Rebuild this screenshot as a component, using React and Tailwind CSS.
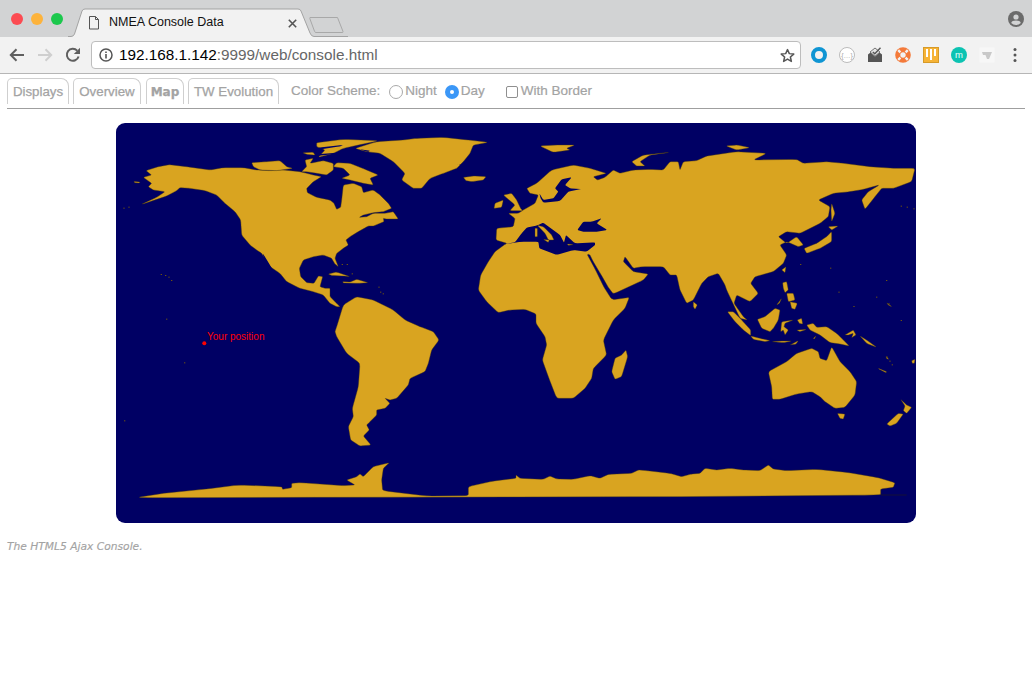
const GOLD = "#d9a420";
const NAVY = "#000064";

const Z3 = "translate(110 120) scale(0.33333)";
const Z4 = "translate(510 120) scale(0.33333)";
const Z5 = "translate(110 320) scale(0.33333)";
const Z6 = "translate(510 320) scale(0.33333)";
const Z8 = "translate(720 270) scale(0.33333)";

const northAmerica = [
  "108,152 145,140 178,134 230,140 300,150 340,143 400,143 440,150 480,152 520,150 570,155 590,160 610,165 635,170 610,185 590,205 592,218 620,232 660,240 672,250 680,268 692,262 695,240 700,195 730,190 755,200 760,218 790,210 810,225 835,250 845,265 820,275 790,278 760,285 748,292 770,290 790,280 825,280 850,275 865,297 830,297 820,295 822,305 790,318 775,318 745,335 720,350 708,360 715,375 700,385 680,400 675,415 685,440 675,432 665,415 640,405 610,410 580,420 568,445 572,470 590,488 612,490 625,468 638,470 630,500 645,505 660,505 660,530 680,550 690,560 680,560 660,550 640,525 610,515 570,505 530,485 510,460 480,440 455,400 440,390 420,375 395,345 392,300 375,275 345,250 320,225 285,212 240,205 210,203 200,212 170,228 120,245 95,253 140,232 165,215 130,210 115,200 125,190 100,172 125,165",
  "680,128 720,130 770,150 805,165 780,175 790,195 760,190 720,180 695,175 720,165 700,145 670,140",
  "425,128 470,125 510,122 530,140 548,145 500,152 450,150 430,140",
  "578,98 610,97 615,105 590,103",
  "585,120 610,115 600,130 640,122 670,130 670,150 650,165 620,160 590,155 575,155 590,140",
  "620,68 700,58 805,62 760,72 700,85 670,100 625,112 645,90 620,80",
  "735,85 800,65 880,60 920,55 1000,52 1075,60 1135,67 1090,75 1080,100 1060,125 1040,145 1000,160 960,175 935,205 910,205 875,180 885,160 850,125 810,100 770,95",
  "1060,172 1090,168 1128,170 1120,180 1085,185 1068,182",
  "72,184 90,186 88,189 74,188",
  "655,462 680,456 720,470 700,468 665,466",
  "698,485 720,486 740,478 775,488 745,490 700,489",
];

const naNavy = [
  "458,400 466,412 490,452 482,448 462,418",
  "625,83 700,75 690,79 630,88",
  "622,103 680,98 675,102 625,107",
  "750,88 780,92 775,96",
  "1040,135 1070,128 1065,132",
];

const eurasia =
  "50,205 80,190 125,150 190,135 240,145 290,160 250,170 262,180 285,172 310,150 330,160 370,150 420,148 460,150 480,125 505,125 510,150 520,125 560,122 590,108 680,95 770,100 730,120 860,118 880,130 950,125 1000,130 1080,140 1150,145 1215,145 1205,185 1150,205 1115,205 1095,230 1065,268 1055,240 1075,215 1108,195 1060,208 1020,215 970,220 925,240 960,260 955,290 930,310 870,340 830,335 805,350 830,370 860,350 880,375 865,380 830,365 810,375 830,405 820,430 790,455 735,470 722,490 745,520 720,545 680,525 672,550 700,590 712,600 690,595 650,510 645,495 625,460 595,470 575,490 550,540 530,550 510,510 500,465 480,465 460,440 395,440 370,445 345,410 340,425 370,455 415,462 400,480 310,522 295,502 272,462 248,422 240,405 236,403 232,404 255,447 282,502 303,535 312,539 358,532 345,565 310,600 280,660 290,705 250,745 245,775 225,805 190,835 140,835 115,770 97,720 110,675 105,650 78,610 78,582 45,568 0,570 -35,578 -70,545 -95,510 -88,465 -65,425 -45,395 -18,375 -10,370 -42,360 -40,325 10,320 15,295 -5,280 25,280 40,270 75,250 85,225 60,220";

const eurasiaNavy = [
  "88,220 100,240 130,235 145,215 135,205 155,178 185,172 165,195 180,205 215,207 175,215 150,243 100,248 92,235",
  "-18,373 15,367 35,340 50,323 82,316 100,308 150,345 162,368 168,345 195,370 255,367 255,375 230,395 190,390 140,405 88,385 85,365 35,365",
  "202,330 220,305 245,305 275,295 260,310 292,330 260,335 220,335",
];

const eurasiaGold = [
  "82,316 100,320 125,345 132,360 115,360 105,340",
  "75,325 82,325 82,350 75,350",
  "100,358 118,360 115,367",
  "172,372 190,374 175,376",
  "-20,225 5,220 20,240 32,265 38,272 0,272 15,255",
  "-45,250 -20,240 -25,262 -48,265",
  "90,78 135,75 195,75 170,85 180,90 130,97",
  "365,125 400,105 480,97 420,105 390,125 405,138 380,138",
  "648,78 680,75 720,83 680,90",
  "882,385 920,370 950,350 965,335 965,365 930,385 890,400",
  "955,320 985,318 965,330",
  "965,250 975,280 965,305 963,270",
  "815,450 828,440 825,458",
  "550,545 562,555 555,568 550,560",
];

const southAmerica =
  "680,20 700,-45 740,-70 790,-60 850,-30 885,0 930,20 970,35 987,60 965,90 955,130 945,155 900,175 895,195 860,235 840,240 825,235 840,250 825,265 800,270 800,285 780,305 770,315 778,330 760,348 783,375 750,378 722,360 715,320 730,290 727,265 745,200 750,130 710,100 680,50 675,35";

const antarctica =
  "78,533 160,520 290,507 385,495 515,500 518,508 545,503 545,490 570,488 700,497 735,495 710,480 740,470 750,462 760,470 790,440 838,428 820,445 815,480 818,512 950,528 1075,527 1075,500 1150,483 1218,475 1218,465 1230,475 1300,478 1320,468 1340,477 1390,478 1440,467 1470,475 1495,463 1565,460 1585,450 1610,452 1680,460 1715,470 1745,462 1770,460 1785,445 1820,450 1860,445 1900,450 1950,452 1975,435 1990,447 2030,452 2120,448 2210,457 2300,472 2355,488 2350,502 2312,507 2312,525 1700,530 700,532";

const oceania = [
  "775,155 830,125 860,100 905,85 925,95 930,115 950,122 965,80 990,125 1020,155 1040,185 1035,225 1005,262 975,265 945,245 930,230 905,215 860,222 810,238 787,238 785,200",
  "982,280 1005,282 1000,297 990,295",
  "1172,238 1190,255 1205,262 1190,280 1180,272 1185,258",
  "1130,312 1165,280 1180,282 1160,310 1140,318",
  "348,90 353,110 335,170 315,178 305,155 315,115 335,105",
  "1105,145 1130,155 1128,158 1108,148",
  "1205,122 1215,118 1213,130 1207,130",
];

const seAsia = [
  "22,125 40,125 65,150 92,180 92,197 70,180 45,155",
  "112,148 135,140 165,115 180,120 175,150 160,175 150,185 125,175",
  "92,198 120,205 150,212 135,215 100,208",
  "155,215 190,213 215,213 190,218",
  "210,225 235,212 228,222",
  "185,155 220,150 195,160 192,170 205,180 195,195 190,180 182,185",
  "188,38 200,35 205,60 195,68 190,55",
  "210,95 232,100 225,118 215,115",
  "200,70 220,70 225,90 205,95",
  "170,105 185,85 178,100",
  "232,150 245,145 248,162 238,160",
  "230,180 260,178 240,185",
  "260,165 280,160 290,172 320,170 350,190 370,210 388,228 360,222 330,218 300,195 270,180",
  "375,195 400,180 408,195 395,203 400,190 385,195",
  "420,198 440,210 470,232 440,220",
  "280,205 288,198 283,207",
  "500,98 515,110 505,105",
  "498,258 506,268 500,266",
];

const specks = [
  [Z3, 152, 462], [Z3, 165, 465], [Z3, 175, 470], [Z3, 183, 480], [Z3, 40, 263], [Z3, 55, 260], [Z3, 168, 596],
  [Z3, 805, 500], [Z3, 810, 515], [Z3, 818, 520], [Z3, 695, 432], [Z3, 710, 432], [Z3, 725, 460],
  [Z4, 870, 432], [Z4, 960, 443], [Z4, 1128, 480], [Z4, 1172, 257], [Z4, 1190, 260], [Z4, 1210, 265], [Z4, 1172, 600],
  [Z4, 985, 515], [Z4, 1030, 558], [Z4, 1098, 530], [Z4, 1135, 550],
  [Z5, 222, 127], [Z5, 42, 301],
  [Z6, 1130, 110], [Z6, 1138, 122], [Z6, 1145, 133],
];

// Softens polygon corners so the coasts read as curves rather than straight facets.
function smooth(points) {
  const p = points.trim().split(/\s+/).map((s) => s.split(",").map(Number));
  const n = p.length;
  const cut = 0.14;
  let d = "";
  for (let i = 0; i < n; i++) {
    const a = p[(i - 1 + n) % n];
    const b = p[i];
    const c = p[(i + 1) % n];
    const x1 = b[0] + (a[0] - b[0]) * cut;
    const y1 = b[1] + (a[1] - b[1]) * cut;
    const x2 = b[0] + (c[0] - b[0]) * cut;
    const y2 = b[1] + (c[1] - b[1]) * cut;
    d += (i === 0 ? "M" : "L") + x1.toFixed(1) + " " + y1.toFixed(1) + "Q" + b[0] + " " + b[1] + " " + x2.toFixed(1) + " " + y2.toFixed(1);
  }
  return d + "Z";
}

function Polys({ transform, pts, fill }) {
  return (
    <g transform={transform} fill={fill} stroke={fill === GOLD ? "#4a3a10" : "none"} strokeWidth="1.2" strokeLinejoin="round">
      {pts.map((p, i) => (
        <path key={i} d={smooth(p)} />
      ))}
    </g>
  );
}

function WorldMap() {
  return (
    <svg viewBox="116 123 800 400" className="block h-full w-full">
      <Polys transform={Z3} pts={northAmerica} fill={GOLD} />
      <Polys transform={Z3} pts={naNavy} fill={NAVY} />
      <Polys transform={Z4} pts={[eurasia]} fill={GOLD} />
      <Polys transform={Z4} pts={eurasiaNavy} fill={NAVY} />
      <Polys transform={Z4} pts={eurasiaGold} fill={GOLD} />
      <Polys transform={Z5} pts={[southAmerica, antarctica]} fill={GOLD} />
      <Polys transform={Z6} pts={oceania} fill={GOLD} />
      <Polys transform={Z8} pts={seAsia} fill={GOLD} />
      <polyline transform={Z6} points="1112,525 1190,525" stroke="#2a2208" strokeWidth="1.5" fill="none" />
      {specks.map(([t, x, y], i) => (
        <rect key={i} transform={t} x={x} y={y} width="4" height="3" fill="#6a5212" />
      ))}
      <circle cx="204.3" cy="343.3" r="2" fill="#ff0000" />
    </svg>
  );
}

function TabShape() {
  return (
    <svg className="absolute left-[68px] top-0" width="280" height="38" viewBox="68 0 280 38">
      <path d="M310 17.5H337.5L343 31.5Q343.4 32.5 342 32.5H316Q315 32.5 314.6 31.5L309.8 18.5Q309.6 17.5 310 17.5Z" fill="#d2d3d4" stroke="#a8a8a8" />
      <path d="M68 36.5H71Q73.5 36.5 74.5 34L82 11Q82.8 9 85 9H298Q300.3 9 301 11L310 33Q311.3 36.5 314 36.5H348V38H68Z" fill="#f2f2f2" />
      <path d="M68 36.5H71Q73.5 36.5 74.5 34L82 11Q82.8 9 85 9H298Q300.3 9 301 11L310 33Q311.3 36.5 314 36.5H348" fill="none" stroke="#a3a3a3" />
    </svg>
  );
}

function TitleBar() {
  return (
    <div className="relative flex h-[37px] items-center bg-[#d2d3d4]">
      <TabShape />
      <div className="relative flex items-center gap-[8px] pl-[11px]">
        <span className="h-[12px] w-[12px] rounded-full bg-[#fc4b52]" />
        <span className="h-[12px] w-[12px] rounded-full bg-[#fdb33c]" />
        <span className="h-[12px] w-[12px] rounded-full bg-[#1cc84d]" />
      </div>
      <svg className="relative ml-[25px] mt-[9px]" width="12" height="14" viewBox="0 0 12 14" fill="none" stroke="#555" strokeWidth="1">
        <path d="M1.5 0.5H7.5L10.5 3.5V13H1.5Z M7.5 0.5V3.5H10.5" />
      </svg>
      <span className="relative ml-[9px] mt-[8px] text-[12.5px] text-[#111] [font-family:'Liberation_Sans',sans-serif]">NMEA Console Data</span>
      <svg className="relative ml-[64px] mt-[10px]" width="9" height="9" viewBox="0 0 9 9" stroke="#555" strokeWidth="1.6">
        <path d="M0.8 0.8L8.2 8.2M8.2 0.8L0.8 8.2" />
      </svg>
      <svg className="absolute left-[1008px] top-[11px]" width="16" height="16" viewBox="0 0 16 16">
        <circle cx="8" cy="8" r="8" fill="#6b6b6b" />
        <circle cx="8" cy="6" r="2.6" fill="#d2d3d4" />
        <path d="M3.2 12Q4 9.6 8 9.6T12.8 12Q10.8 14 8 14T3.2 12Z" fill="#d2d3d4" />
      </svg>
    </div>
  );
}

function ExtIcons() {
  return (
    <div className="ml-[10px] flex items-center gap-[12px]">
      <svg width="16" height="16" viewBox="0 0 16 16">
        <circle cx="8" cy="8" r="6" fill="none" stroke="#0f95d3" strokeWidth="4" />
      </svg>
      <svg width="16" height="16" viewBox="0 0 16 16">
        <circle cx="8" cy="8" r="7.5" fill="#fff" stroke="#bbb" />
        <text x="8" y="10.5" fontSize="7" textAnchor="middle" fill="#aaa" fontFamily="Liberation Sans">{"{…}"}</text>
      </svg>
      <svg width="16" height="16" viewBox="0 0 16 16">
        <path d="M1 7.5L3.5 5.5L8 9.5L12.5 5.5L15 7.5V15H1Z" fill="#555" />
        <path d="M3 5L8 1L13 5L8 9.2Z" fill="#e4e4e4" stroke="#555" strokeWidth="0.8" />
        <path d="M5.8 5L7.8 6.8L13.5 0.8" fill="none" stroke="#555" strokeWidth="1.4" />
      </svg>
      <svg width="16" height="16" viewBox="0 0 16 16">
        <circle cx="8" cy="8" r="7.8" fill="#f47a3a" />
        <circle cx="8" cy="8" r="2.7" fill="#f2f2f2" />
        <path d="M3.2 3.2L5.4 5.4M12.8 3.2L10.6 5.4M3.2 12.8L5.4 10.6M12.8 12.8L10.6 10.6" stroke="#f2f2f2" strokeWidth="2.4" />
      </svg>
      <svg width="16" height="16" viewBox="0 0 16 16">
        <rect x="0.5" y="0.5" width="15" height="15" fill="#f6b336" stroke="#d69a28" />
        <path d="M3 2V10H5V2ZM7 2V13H9V2ZM11 2V9H13V2Z" fill="#fff" />
      </svg>
      <svg width="16" height="16" viewBox="0 0 16 16">
        <circle cx="8" cy="8" r="8" fill="#0cc3b2" />
        <text x="8" y="11" fontSize="9.5" textAnchor="middle" fill="#e8fffb" fontFamily="Liberation Sans">m</text>
      </svg>
      <svg width="16" height="16" viewBox="0 0 16 16">
        <rect x="0.5" y="0.5" width="15" height="15" fill="#f7f7f7" />
        <path d="M3 5H13L10 12H8L6.5 8H4Z" fill="#c9c9c9" />
      </svg>
      <svg width="16" height="16" viewBox="0 0 16 16" fill="#555">
        <circle cx="8" cy="2.5" r="1.5" />
        <circle cx="8" cy="8" r="1.5" />
        <circle cx="8" cy="13.5" r="1.5" />
      </svg>
    </div>
  );
}

function AddressBar() {
  return (
    <div className="flex h-[37px] items-center border-b border-[#b6b6b6] bg-[#f2f2f2]">
      <svg className="ml-[9px]" width="16" height="14" viewBox="0 0 16 14" fill="none" stroke="#5f5f5f" strokeWidth="2">
        <path d="M15 7H2M7.5 1.2L1.8 7L7.5 12.8" />
      </svg>
      <svg className="ml-[12px]" width="16" height="14" viewBox="0 0 16 14" fill="none" stroke="#cfcfcf" strokeWidth="2">
        <path d="M1 7H14M8.5 1.2L14.2 7L8.5 12.8" />
      </svg>
      <svg className="ml-[12px]" width="16" height="16" viewBox="0 0 16 16" fill="none">
        <path d="M13.6 9.5A6 6 0 1 1 12.2 3.6" stroke="#5f5f5f" strokeWidth="2" />
        <path d="M15 0.8V7H8.8Z" fill="#5f5f5f" />
      </svg>
      <div className="ml-[10px] flex h-[28px] w-[710px] items-center rounded-[4px] border border-[#bdbdbd] bg-white pl-[7px] pr-[5px]">
        <svg width="14" height="14" viewBox="0 0 14 14">
          <circle cx="7" cy="7" r="6" fill="none" stroke="#555" strokeWidth="1.5" />
          <path d="M6.2 6H7.8V10.4H6.2ZM6.2 3.4H7.8V5H6.2Z" fill="#555" />
        </svg>
        <span className="ml-[6px] text-[15.3px] text-[#666] [font-family:'Liberation_Sans',sans-serif]">
          <span className="text-black">192.168.1.142</span>:9999/web/console.html
        </span>
        <svg className="ml-auto" width="15" height="15" viewBox="0 0 24 24" fill="none" stroke="#555" strokeWidth="2.4" strokeLinejoin="round">
          <path d="M12 2.5L14.9 9L22 9.7L16.6 14.4L18.2 21.4L12 17.7L5.8 21.4L7.4 14.4L2 9.7L9.1 9Z" />
        </svg>
      </div>
      <ExtIcons />
    </div>
  );
}

function Tab({ children, className }) {
  return (
    <div className={"flex h-[26px] items-center justify-center rounded-tl-[5px] rounded-tr-[8px] border border-b-0 border-[#cfcfcf] pt-[1px] text-[#a3a3a3] [-webkit-text-stroke:0.25px_#a3a3a3] " + className}>
      {children}
    </div>
  );
}

function Controls() {
  const font = "[font-family:'Liberation_Sans',sans-serif]";
  return (
    <div className={"flex h-[34px] items-start pl-[7px] pt-[4px] " + font}>
      <Tab className="w-[62px] text-[13.3px]">Displays</Tab>
      <Tab className="ml-[4px] w-[68px] text-[13.3px]">Overview</Tab>
      <Tab className="ml-[5px] w-[38px] text-[12px] font-bold [font-family:'DejaVu_Sans',sans-serif]">Map</Tab>
      <Tab className="ml-[4px] w-[91px] text-[13.3px]">TW Evolution</Tab>
      <div className="flex h-[26px] items-center pt-[1px] text-[13.5px] text-[#a3a3a3] [-webkit-text-stroke:0.2px_#a3a3a3]">
        <span className="ml-[12px]">Color Scheme:</span>
        <span className="ml-[9px] h-[14px] w-[14px] rounded-full border border-[#a9a9a9] bg-white" />
        <span className="ml-[2px]">Night</span>
        <span className="ml-[8px] flex h-[14px] w-[14px] items-center justify-center rounded-full bg-[#3b97f7]">
          <span className="h-[4px] w-[4px] rounded-full bg-white" />
        </span>
        <span className="ml-[2px]">Day</span>
        <span className="ml-[21px] h-[12px] w-[12px] rounded-[2px] border border-[#8f8f8f] bg-white" />
        <span className="ml-[3px]">With Border</span>
      </div>
    </div>
  );
}

export default function App() {
  return (
    <div className="h-[692px] w-[1032px] overflow-hidden bg-white">
      <TitleBar />
      <AddressBar />
      <Controls />
      <div className="mx-[7px] h-[1px] bg-[#9f9f9f]" />
      <div className="relative mx-auto mt-[14px] h-[400px] w-[800px] overflow-hidden rounded-[9px] bg-[#000064]">
        <WorldMap />
        <span className="absolute left-[91px] top-[208px] text-[10px] leading-[12px] text-[#ff0000] [font-family:'Liberation_Sans',sans-serif]">Your position</span>
      </div>
      <p className="ml-[7px] mt-[16px] text-[10.7px] italic text-[#a3a3a3] [-webkit-text-stroke:0.15px_#a3a3a3] [font-family:'DejaVu_Sans',sans-serif]">The HTML5 Ajax Console.</p>
    </div>
  );
}
